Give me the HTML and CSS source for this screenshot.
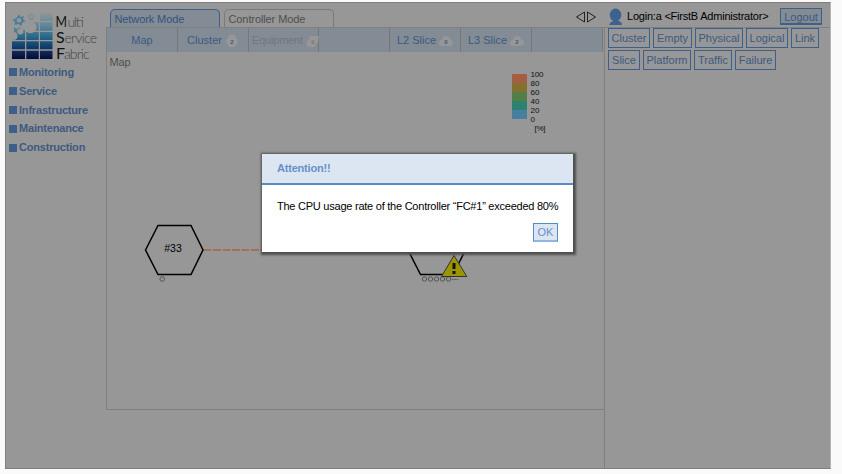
FILE: index.html
```html
<!DOCTYPE html>
<html lang="en">
<head>
<meta charset="utf-8">
<title>Multi Service Fabric</title>
<link rel="stylesheet" href="styles.css">
</head>
<body>
<div class="app">
  <aside class="side">
    <svg class="logo" width="92" height="54" viewBox="6 8 92 54">
      <defs>
        <linearGradient id="lg" gradientUnits="userSpaceOnUse" x1="0" y1="13" x2="0" y2="59">
          <stop offset="0" stop-color="#8b959a"/><stop offset=".28" stop-color="#5f8799"/>
          <stop offset=".5" stop-color="#2c6b8a"/><stop offset=".72" stop-color="#12406e"/><stop offset="1" stop-color="#050a38"/>
        </linearGradient>
      </defs>
      <path d="M40 13.300h12.500V21H40ZM26.300 22.300h12.500v8.500H26.300ZM40 22.300h12.500v8.500H40ZM12 32h13v8H12ZM26.300 32h12.500v8H26.300ZM40 32h12.500v8H40ZM12 41.300h13v8H12ZM26.300 41.300h12.500v8H26.300ZM40 41.300h12.500v8H40ZM12 50.700h13V59H12ZM26.300 50.700h12.500V59H26.300ZM40 50.700h12.500V59H40Z" fill="url(#lg)"/>
      <path d="M19 14.500L20.500 17L24 16L23 19L25.500 21.500L22.500 22.500L21.500 26L18.500 24L14.500 25L15 22L12.500 19.500L16 18.500Z" fill="#4b7f98"/>
      <path d="M31 12.500L32.500 15L35 15.500L33 17.500L33.500 20H28.500L29 17.500L27 15.500L29.500 15Z" fill="#7b919a"/>
      <path d="M14 27.500L17 29L20 27L21 29.500L25 30V33H17L14 33Z" fill="#4b7f98"/>
      <g fill="#979797"><circle cx="30.500" cy="27.300" r="6"/><circle cx="20.300" cy="31.500" r="3"/><circle cx="13.500" cy="36" r="4"/><circle cx="19" cy="20.300" r="2.200"/><circle cx="31" cy="16.500" r="1.500"/></g>
      <g class="logo-text">
        <text class="cap" x="55.500" y="26.500" textLength="11.500" lengthAdjust="spacingAndGlyphs">M</text><text x="67.500" y="26.500" textLength="16.500">ulti</text>
        <text class="cap" x="56" y="42.500">S</text><text x="64.500" y="42.500" textLength="32.500">ervice</text>
        <text class="cap" x="56" y="58.500">F</text><text x="64" y="58.500" textLength="25.500">abric</text>
      </g>
    </svg>
    <ul class="menu">
      <li>Monitoring</li><li>Service</li><li>Infrastructure</li><li>Maintenance</li><li>Construction</li>
    </ul>
  </aside>
  <div class="work">
    <header class="top">
      <div class="mode active">Network Mode</div>
      <div class="mode">Controller Mode</div>
      <svg class="arrows" width="20" height="12" viewBox="0 0 20 12"><path d="M8.500 1V11L.5 6ZM11.500 1V11L19.500 6Z" fill="none" stroke="#222" stroke-width="1"/></svg>
      <svg class="user" width="14" height="18" viewBox="0 0 14 18"><path d="M0 17Q1 14 4 13H10Q13 14 13 17Z" fill="#3d628f"/><ellipse cx="6.500" cy="7" rx="5.800" ry="6.500" fill="#3d628f"/></svg>
      <span class="login">Login:a &lt;FirstB Administrator&gt;</span>
      <button class="logout">Logout</button>
    </header>
    <div class="columns">
      <main class="main">
        <nav class="tabs">
          <div class="tab">Map</div>
          <div class="tab count">Cluster <svg width="14" height="12" viewBox="0 0 14 12"><path d="M4 0H10L13 6L10 12H4L1 6Z"/><text x="7" y="8.500">2</text></svg></div>
          <div class="tab count off">Equipment <svg width="14" height="12" viewBox="0 0 14 12"><path d="M4 1H13L12 7L8 12H2L0 9Z"/><text x="7" y="8.500">0</text></svg></div>
          <div class="tab"></div>
          <div class="tab count">L2 Slice <svg width="14" height="12" viewBox="0 0 14 12"><path d="M3 11Q0 11 0 8Q0 5 3 5Q3 1 7 1Q10 1 11 4Q14 5 14 8Q14 11 11 11Z"/><text x="7" y="8.500">0</text></svg></div>
          <div class="tab count">L3 Slice <svg width="14" height="12" viewBox="0 0 14 12"><path d="M3 11Q0 11 0 8Q0 5 3 5Q3 1 7 1Q10 1 11 4Q14 5 14 8Q14 11 11 11Z"/><text x="7" y="8.500">2</text></svg></div>
          <div class="tab"></div>
        </nav>
        <svg class="map" width="496" height="357" viewBox="107 52 496 357">
          <text class="title" x="109.500" y="66" textLength="21">Map</text>
          <path fill="#a65e42" d="M512 74h15v9h-15z"/><path fill="#83722f" d="M512 83h15v9h-15z"/>
          <path fill="#537e48" d="M512 92h15v9h-15z"/><path fill="#2b8271" d="M512 101h15v9h-15z"/>
          <path fill="#487f9d" d="M512 110h15v9h-15z"/>
          <g class="scale">
            <text x="530.500" y="77" textLength="13">100</text><text x="530.500" y="86">80</text><text x="530.500" y="95">60</text>
            <text x="530.500" y="104">40</text><text x="530.500" y="113">20</text><text x="530.500" y="122">0</text><text x="534.500" y="131" textLength="11">[%]</text>
          </g>
          <path d="M203.500 249.800H410" stroke="#a66a4d" stroke-width="1.800" stroke-dasharray="8 1.500"/>
          <g fill="none" stroke="#000" stroke-width="1.500">
            <path d="M145.500 250L158 225.500H191L203 250L191 274.500H158Z"/>
            <path d="M408 250L420.500 225.500H453L465.500 250L453 274.500H420.500Z"/>
          </g>
          <text class="node" x="173" y="252">#33</text>
          <g fill="none" stroke="#555">
            <circle cx="162.200" cy="279" r="2.300"/><circle cx="424.500" cy="279" r="2.200"/><circle cx="430.500" cy="279" r="2.200"/>
            <circle cx="436.500" cy="279" r="2.200"/><circle cx="442.500" cy="279" r="2.200"/><circle cx="448.500" cy="279" r="2.200"/>
            <path d="M452 279.500h7" stroke-dasharray="1.500 .8"/>
          </g>
          <path d="M454 255.500L466.800 276.500H441.500Z" fill="#999600" stroke="#333" stroke-width="1"/>
          <path d="M452.500 263h3v6h-3zM452.500 271h3v3h-3z" fill="#111"/>
        </svg>
      </main>
      <section class="filters">
        <div class="row"><button class="w42">Cluster</button><button class="w39">Empty</button><button class="w48">Physical</button><button class="w42">Logical</button><button class="w28">Link</button></div>
        <div class="row"><button class="w32">Slice</button><button class="w48">Platform</button><button class="w38">Traffic</button><button class="w41">Failure</button></div>
      </section>
    </div>
  </div>
</div>
<div class="dialog">
  <h2>Attention!!</h2>
  <p>The CPU usage rate of the Controller “FC#1” exceeded 80%</p>
  <button class="ok">OK</button>
</div>
</body>
</html>
```
FILE: styles.css
```css
* { box-sizing: border-box; }
body {
  margin: 0;
  width: 842px;
  height: 474px;
  overflow: hidden;
  background: #fafafa;
  padding: 2px 0 0 5px;
  font: 11px/14px "Liberation Sans", Arial, sans-serif;
  color: #3d5a80;
}
.app {
  width: 826px;
  height: 467px;
  display: flex;
  background: #979797;
  border: 1px solid #7f7f7f;
  border-right-color: #b5b5b5;
}
.side { width: 100px; padding-top: 5px; }
.logo { display: block; overflow: visible; }
.logo-text { font: 300 14px Lato, sans-serif; fill: #444; }
.cap { font-size: 16px; fill: #111; font-weight: 400; }
.menu { list-style: none; margin: 1px 0 0 3px; padding: 0; font-weight: bold; letter-spacing: -.19px; }
.menu li { height: 18.8px; line-height: 18.8px; display: flex; align-items: center; gap: 2px; }
.menu li::before { content: ""; width: 8px; height: 8px; background: #3d5f8a; }

.work { flex: 1; min-width: 0; display: flex; flex-direction: column; }
.top {
  height: 24px;
  display: flex;
  align-items: flex-end;
  padding-left: 4px;
}
.mode {
  width: 110px;
  height: 18px;
  margin-right: 4px;
  padding-left: 3.5px;
  line-height: 18px;
  letter-spacing: -.1px;
  border: 1px solid #7a7a7a;
  border-bottom: 0;
  border-radius: 5px 5px 0 0;
  color: #4f4f4f;
}
.mode.active { background: #838b94; border-color: #3d5f8a; color: #34537c; }
.arrows { margin: 0 13px 4px 238px; }
.user { margin-bottom: 1px; }
.login { margin: 0 11px 4px 4px; width: 142px; white-space: nowrap; color: #000; letter-spacing: -.22px; }
button {
  display: block;
  padding: 0;
  margin: 0;
  border: 1px solid #3d5f8a;
  background: none;
  font: inherit;
  color: #3d5a80;
  text-align: center;
  white-space: nowrap;
}
.logout { width: 42px; height: 17px; margin-bottom: 2px; line-height: 16px; background: #838b94; border-bottom-width: 2px; }
.columns { flex: 1; display: flex; border-top: 1px solid #7f7f7f; }
.main { width: 498px; height: 382px; border: solid #7f7f7f; border-width: 0 0 1px 1px; }
.tabs { height: 24px; display: grid; grid-template-columns: 71px 71px 70px repeat(4, 71px); width: 496px; background: #838b94; }
.tab { border-right: 1px solid #777; text-align: center; line-height: 24px; white-space: nowrap; }
.tab.count { display: flex; align-items: center; justify-content: center; gap: 3px; }
.tab svg { flex: none; fill: #979797; margin-top: 2px; }
.tab svg text { font: bold 6px "Liberation Sans", sans-serif; fill: #3d5a80; text-anchor: middle; letter-spacing: 0; }
.tab.off { color: #707780; letter-spacing: -.2px; justify-content: flex-start; padding-left: 3px; }
.tab.off svg text { fill: #777; }
.map { display: block; }
.title { font-size: 11px; fill: #4f4f4f; }
.scale { font-size: 8px; fill: #111; }
.node { font-size: 10.5px; fill: #000; text-anchor: middle; }
.filters { flex: 1; border-left: 1px solid #7f7f7f; padding-left: 3px; }
.row { display: flex; gap: 3px; margin-bottom: 2px; }
.row button { height: 20px; }
.w42 { width: 42px; } .w39 { width: 39px; } .w48 { width: 48px; } .w28 { width: 28px; }
.w32 { width: 32px; } .w38 { width: 38px; } .w41 { width: 41px; }

.dialog {
  position: absolute;
  left: 262px;
  top: 154px;
  width: 311px;
  height: 98px;
  background: #fff;
  box-shadow: 1px 1px 2px 2px #505050;
}
.dialog h2 {
  margin: 0;
  height: 31px;
  padding-left: 15px;
  font-size: 11px;
  letter-spacing: -.2px;
  line-height: 28px;
  color: #6690c8;
  background: #dce6f2;
  border-bottom: 2px solid #5b8bc5;
}
.dialog p { margin: 14px 0 0 15px; color: #000; white-space: nowrap; letter-spacing: -.24px; }
.ok { width: 25px; height: 19px; margin: 10px 0 0 271px; background: #dce6f2; color: #6690c8; border-color: #5b8bc5; border-bottom: 2px solid #8fb5e3; }
```
